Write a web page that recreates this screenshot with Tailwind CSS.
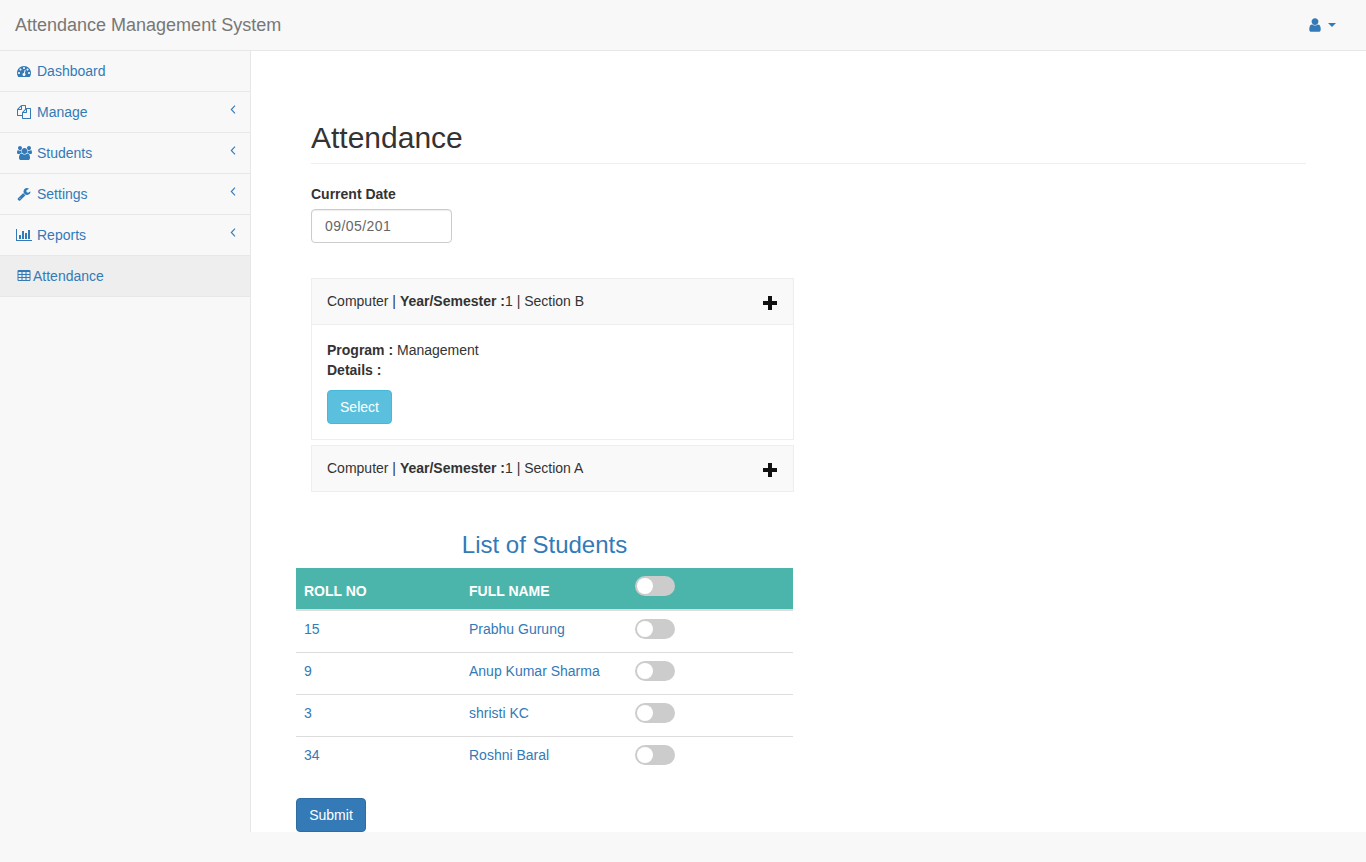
<!DOCTYPE html>
<html lang="en">
<head>
    <meta charset="UTF-8">
    <meta name="viewport" content="width=device-width, initial-scale=1.0">
    <title>Attendance Management System</title>
    <script src="https://cdn.jsdelivr.net/npm/@tailwindcss/browser@4"></script>
</head>
<body class="bg-[#f8f8f8] min-h-screen font-['Liberation_Sans',Arial,sans-serif] text-sm leading-5 text-[#333]">

<!-- top bar -->
<nav class="h-[51px] border-b border-[#e7e7e7] flex items-center justify-between pl-[15px] pr-[30px]">
    <a href="#" class="text-[18px] text-[#777]">Attendance Management System</a>
    <a href="#" class="flex items-center gap-[5px] text-[#337ab7]">
        <svg class="w-4 h-4 fill-current" viewBox="0 0 1792 1792"><path d="M1536 1399q0 109-62.5 187t-150.5 78h-854q-88 0-150.5-78t-62.5-187q0-85 8.5-160.5t31.5-152 58.5-131 94-89 134.5-34.5q131 128 313 128t313-128q76 0 134.5 34.5t94 89 58.5 131 31.5 152 8.5 160.5zm-256-887q0 159-112.5 271.5t-271.5 112.5-271.5-112.5-112.5-271.5 112.5-271.5 271.5-112.5 271.5 112.5 112.5 271.5z"/></svg>
        <span class="w-0 h-0 border-x-4 border-x-transparent border-t-4 border-t-[#337ab7]"></span>
    </a>
</nav>

<div class="flex">
    <!-- sidebar -->
    <aside class="w-[251px] shrink-0 border-r border-[#e7e7e7] text-[#337ab7]">
        <a href="#" class="flex items-center h-[41px] pl-4 pb-px border-b border-[#e7e7e7]">
            <span class="w-4 mr-[5px] flex justify-center">
                <svg class="w-[14px] h-[14px] fill-current shrink-0" viewBox="0 0 1792 1792"><path d="M384 1152q0-53-37.5-90.5t-90.5-37.5-90.5 37.5-37.5 90.5 37.5 90.5 90.5 37.5 90.5-37.5 37.5-90.5zm192-448q0-53-37.5-90.5t-90.5-37.5-90.5 37.5-37.5 90.5 37.5 90.5 90.5 37.5 90.5-37.5 37.5-90.5zm428 481l101-382q6-26-7.5-48.5t-38.5-29.5-48 6.5-30 39.5l-101 382q-60 5-107 43.5t-63 98.5q-20 77 20 146t117 89 146-20 89-117q16-60-6-117t-72-91zm660-33q0-53-37.5-90.5t-90.5-37.5-90.5 37.5-37.5 90.5 37.5 90.5 90.5 37.5 90.5-37.5 37.5-90.5zm-640-640q0-53-37.5-90.5t-90.5-37.5-90.5 37.5-37.5 90.5 37.5 90.5 90.5 37.5 90.5-37.5 37.5-90.5zm448 192q0-53-37.5-90.5t-90.5-37.5-90.5 37.5-37.5 90.5 37.5 90.5 90.5 37.5 90.5-37.5 37.5-90.5zm320 448q0 261-141 483-19 29-54 29h-1402q-35 0-54-29-141-221-141-483 0-182 71-348t191-286 286-191 348-71 348 71 286 191 191 286 71 348z"/></svg>
            </span>
            Dashboard
        </a>
        <a href="#" class="flex items-center h-[41px] pl-4 pr-[14px] border-b border-[#e7e7e7]">
            <span class="w-4 mr-[5px] flex justify-center">
                <svg class="w-[14px] h-[14px] fill-current shrink-0" viewBox="0 0 1792 1792"><path d="M1696 384q40 0 68 28t28 68v1216q0 40-28 68t-68 28h-960q-40 0-68-28t-28-68v-288h-544q-40 0-68-28t-28-68v-672q0-40 20-88t48-76l408-408q28-28 76-48t88-20h416q40 0 68 28t28 68v328q68-40 128-40h416zm-544 213l-299 299h299v-299zm-640-384l-299 299h299v-299zm196 647l316-316v-416h-384v416q0 40-28 68t-68 28h-416v640h512v-256q0-40 20-88t48-76zm956 804v-1152h-384v416q0 40-28 68t-68 28h-416v640h896z"/></svg>
            </span>
            Manage
            <svg class="ml-auto mb-[5px] w-[6px] h-[9px] fill-none stroke-current" viewBox="0 0 6 9"><path d="M5 .7L1.3 4.5L5 8.3" stroke-width="1.1"/></svg>
        </a>
        <a href="#" class="flex items-center h-[41px] pl-4 pr-[14px] border-b border-[#e7e7e7]">
            <span class="w-4 mr-[5px] flex justify-center">
                <svg class="w-[15px] h-[14px] fill-current shrink-0" viewBox="0 0 1920 1792"><path d="M593 896q-162 5-265 128h-134q-82 0-138-40.5t-56-118.5q0-353 124-353 6 0 43.5 21t97.5 42.5 119 21.5q67 0 133-23-5 37-5 66 0 139 81 256zm1071 637q0 120-73 189.5t-194 69.5h-874q-121 0-194-69.5t-73-189.5q0-53 3.5-103.5t14-109 26.5-108.5 43-97.5 62-81 85.5-53.5 111.5-20q10 0 43 21.5t73 48 107 48 135 21.5 135-21.5 107-48 73-48 43-21.5q61 0 111.5 20t85.5 53.5 62 81 43 97.5 26.5 108.5 14 109 3.5 103.5zm-1024-1277q0 106-75 181t-181 75-181-75-75-181 75-181 181-75 181 75 75 181zm704 384q0 159-112.5 271.5t-271.5 112.5-271.5-112.5-112.5-271.5 112.5-271.5 271.5-112.5 271.5 112.5 112.5 271.5zm576 225q0 78-56 118.5t-138 40.5h-134q-103-123-265-128 81-117 81-256 0-29-5-66 66 23 133 23 59 0 119-21.5t97.5-42.5 43.5-21q124 0 124 353zm-128-609q0 106-75 181t-181 75-181-75-75-181 75-181 181-75 181 75 75 181z"/></svg>
            </span>
            Students
            <svg class="ml-auto mb-[5px] w-[6px] h-[9px] fill-none stroke-current" viewBox="0 0 6 9"><path d="M5 .7L1.3 4.5L5 8.3" stroke-width="1.1"/></svg>
        </a>
        <a href="#" class="flex items-center h-[41px] pl-4 pr-[14px] border-b border-[#e7e7e7]">
            <span class="w-4 mr-[5px] flex justify-center">
                <svg class="w-[14px] h-[14px] fill-current shrink-0" viewBox="0 0 1792 1792"><path d="M448 1472q0-26-19-45t-45-19-45 19-19 45 19 45 45 19 45-19 19-45zm644-420l-682 682q-37 37-90 37-52 0-91-37l-106-108q-38-36-38-90 0-53 38-91l681-681q39 98 114.5 173.5t173.5 114.5zm634-435q0 39-23 106-47 134-164.5 217.5t-258.5 83.5q-185 0-316.5-131.5t-131.5-316.5 131.5-316.5 316.5-131.5q58 0 121.5 16.5t107.5 46.5q16 11 16 28t-16 28l-293 169v224l193 107q5-3 79-48.5t135.5-81 70.5-35.5q15 0 23.5 10t8.5 25z"/></svg>
            </span>
            Settings
            <svg class="ml-auto mb-[5px] w-[6px] h-[9px] fill-none stroke-current" viewBox="0 0 6 9"><path d="M5 .7L1.3 4.5L5 8.3" stroke-width="1.1"/></svg>
        </a>
        <a href="#" class="flex items-center h-[41px] pl-4 pr-[14px] border-b border-[#e7e7e7]">
            <span class="w-4 mr-[5px] flex justify-center">
                <svg class="w-4 h-[14px] fill-current shrink-0" viewBox="0 0 2048 1792"><path d="M640 896v512h-256v-512h256zm384-512v1024h-256v-1024h256zm1024 1152v128h-2048v-1536h128v1408h1920zm-640-896v768h-256v-768h256zm384-384v1152h-256v-1152h256z"/></svg>
            </span>
            Reports
            <svg class="ml-auto mb-[5px] w-[6px] h-[9px] fill-none stroke-current" viewBox="0 0 6 9"><path d="M5 .7L1.3 4.5L5 8.3" stroke-width="1.1"/></svg>
        </a>
        <a href="#" class="flex items-center h-[41px] pl-4 bg-[#eeeeee] border-b border-[#e7e7e7]">
            <span class="w-4 mr-px flex justify-center">
                <svg class="w-[14px] h-[14px] fill-current shrink-0" viewBox="0 0 1792 1792"><path d="M576 1376v-192q0-14-9-23t-23-9h-320q-14 0-23 9t-9 23v192q0 14 9 23t23 9h320q14 0 23-9t9-23zm0-384v-192q0-14-9-23t-23-9h-320q-14 0-23 9t-9 23v192q0 14 9 23t23 9h320q14 0 23-9t9-23zm512 384v-192q0-14-9-23t-23-9h-320q-14 0-23 9t-9 23v192q0 14 9 23t23 9h320q14 0 23-9t9-23zm-512-768v-192q0-14-9-23t-23-9h-320q-14 0-23 9t-9 23v192q0 14 9 23t23 9h320q14 0 23-9t9-23zm512 384v-192q0-14-9-23t-23-9h-320q-14 0-23 9t-9 23v192q0 14 9 23t23 9h320q14 0 23-9t9-23zm512 384v-192q0-14-9-23t-23-9h-320q-14 0-23 9t-9 23v192q0 14 9 23t23 9h320q14 0 23-9t9-23zm-512-768v-192q0-14-9-23t-23-9h-320q-14 0-23 9t-9 23v192q0 14 9 23t23 9h320q14 0 23-9t9-23zm512 384v-192q0-14-9-23t-23-9h-320q-14 0-23 9t-9 23v192q0 14 9 23t23 9h320q14 0 23-9t9-23zm0-384v-192q0-14-9-23t-23-9h-320q-14 0-23 9t-9 23v192q0 14 9 23t23 9h320q14 0 23-9t9-23zm128-320v1088q0 66-47 113t-113 47h-1344q-66 0-113-47t-47-113v-1088q0-66 47-113t113-47h1344q66 0 113 47t47 113z"/></svg>
            </span>
            Attendance
        </a>
    </aside>

    <!-- main -->
    <main class="flex-1 bg-white px-[45px] pt-[70px]">
        <div class="mx-[15px]">
            <h1 class="text-[30px] leading-[33px] font-normal pb-[9px] border-b border-[#eeeeee]">Attendance</h1>
            <label class="block mt-5 mb-[5px] font-bold">Current Date</label>
            <input type="text" value="09/05/201" class="block w-[141px] h-[34px] px-[13px] tracking-[0.45px] border border-[#cccccc] rounded text-[#666] shadow-[inset_0_1px_1px_rgba(0,0,0,0.075)]">

            <div class="w-[483px] mt-[35px] border border-[#eeeeee]">
                <div class="h-[46px] pl-[15px] pr-4 bg-[#f9f9f9] border-b border-[#eeeeee] flex items-center justify-between">
                    <span class="mb-[2px]">Computer | <b>Year/Semester :</b>1 | Section B</span>
                    <svg class="w-[14px] h-[14px] mt-[2px] fill-[#111]" viewBox="0 0 14 14"><path d="M5 0h4v5h5v4H9v5H5V9H0V5h5z"/></svg>
                </div>
                <div class="p-[15px]">
                    <div><b>Program :</b> Management</div>
                    <div><b>Details :</b></div>
                    <button class="block mt-[10px] h-[34px] w-[65px] bg-[#5bc0de] border border-[#46b8da] rounded text-white">Select</button>
                </div>
            </div>
            <div class="w-[483px] mt-[5px] border border-[#eeeeee]">
                <div class="h-[45px] pl-[15px] pr-4 bg-[#f9f9f9] flex items-center justify-between">
                    <span class="mb-[2px]">Computer | <b>Year/Semester :</b>1 | Section A</span>
                    <svg class="w-[14px] h-[14px] mt-[2px] fill-[#111]" viewBox="0 0 14 14"><path d="M5 0h4v5h5v4H9v5H5V9H0V5h5z"/></svg>
                </div>
            </div>
        </div>

        <div class="w-[497px]">
            <h3 class="mt-10 mb-[10px] text-2xl leading-[26px] font-normal text-center text-[#337ab7]">List of Students</h3>
            <table class="w-full table-fixed border-separate border-spacing-0 text-[#337ab7]">
                <colgroup><col class="w-[165px]"><col class="w-[166px]"><col></colgroup>
                <thead class="bg-[#4cb5ab] text-white text-left">
                    <tr>
                        <th class="h-[43px] px-2 pt-[13px] align-top border-b-2 border-[#dddddd]">ROLL NO</th>
                        <th class="h-[43px] px-2 pt-[13px] align-top border-b-2 border-[#dddddd]">FULL NAME</th>
                        <th class="h-[43px] px-2 pt-2 align-top border-b-2 border-[#dddddd]">
                            <span class="block relative w-10 h-5 rounded-full bg-[#cccccc]"><span class="absolute left-[2px] top-[2px] w-4 h-4 rounded-full bg-white"></span></span>
                        </th>
                    </tr>
                </thead>
                <tbody>
                    <tr>
                        <td class="h-[42px] px-2 pt-2 align-top border-b border-[#dddddd]">15</td>
                        <td class="h-[42px] px-2 pt-2 align-top border-b border-[#dddddd]">Prabhu Gurung</td>
                        <td class="h-[42px] px-2 pt-2 align-top border-b border-[#dddddd]">
                            <span class="block relative w-10 h-5 rounded-full bg-[#cccccc]"><span class="absolute left-[2px] top-[2px] w-4 h-4 rounded-full bg-white"></span></span>
                        </td>
                    </tr>
                    <tr>
                        <td class="h-[42px] px-2 pt-2 align-top border-b border-[#dddddd]">9</td>
                        <td class="h-[42px] px-2 pt-2 align-top border-b border-[#dddddd]">Anup Kumar Sharma</td>
                        <td class="h-[42px] px-2 pt-2 align-top border-b border-[#dddddd]">
                            <span class="block relative w-10 h-5 rounded-full bg-[#cccccc]"><span class="absolute left-[2px] top-[2px] w-4 h-4 rounded-full bg-white"></span></span>
                        </td>
                    </tr>
                    <tr>
                        <td class="h-[42px] px-2 pt-2 align-top border-b border-[#dddddd]">3</td>
                        <td class="h-[42px] px-2 pt-2 align-top border-b border-[#dddddd]">shristi KC</td>
                        <td class="h-[42px] px-2 pt-2 align-top border-b border-[#dddddd]">
                            <span class="block relative w-10 h-5 rounded-full bg-[#cccccc]"><span class="absolute left-[2px] top-[2px] w-4 h-4 rounded-full bg-white"></span></span>
                        </td>
                    </tr>
                    <tr>
                        <td class="h-[41px] px-2 pt-2 align-top">34</td>
                        <td class="h-[41px] px-2 pt-2 align-top">Roshni Baral</td>
                        <td class="h-[41px] px-2 pt-2 align-top">
                            <span class="block relative w-10 h-5 rounded-full bg-[#cccccc]"><span class="absolute left-[2px] top-[2px] w-4 h-4 rounded-full bg-white"></span></span>
                        </td>
                    </tr>
                </tbody>
            </table>
            <button class="block mt-5 h-[34px] w-[70px] bg-[#337ab7] border border-[#2e6da4] rounded text-white">Submit</button>
        </div>
    </main>
</div>
</body>
</html>
